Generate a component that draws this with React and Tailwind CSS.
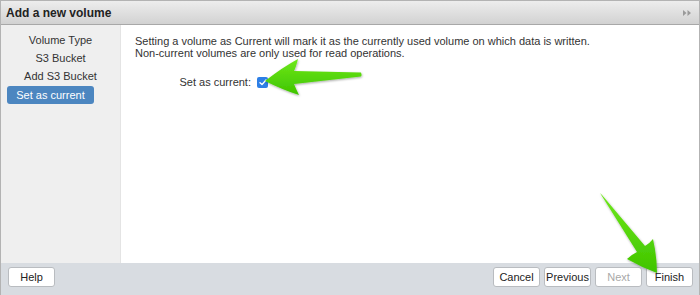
import React from "react";

function Btn({ children, disabled, className = "" }) {
  return (
    <div
      className={`h-[20px] w-[47px] flex items-center justify-center bg-white border border-[#b9bcc0] rounded-[3px] text-[11px] ${
        disabled ? "text-[#a8a8a8]" : "text-[#222]"
      } ${className}`}
    >
      {children}
    </div>
  );
}

export default function App() {
  return (
    <div className="relative w-[700px] h-[295px] flex flex-col overflow-hidden border-x border-t border-[#b3b3b3] font-['Liberation_Sans',Arial,sans-serif] text-[#333]">
      {/* title bar */}
      <div className="h-[24px] shrink-0 flex items-center justify-between pl-[5px] pr-[8px] bg-gradient-to-b from-[#ededed] to-[#d2d2d2] border-b border-[#a8a8a8]">
        <span className="text-[12px] font-bold text-[#222]">Add a new volume</span>
        <svg width="8" height="6" viewBox="0 0 8 6">
          <path d="M0 0 L3.5 3 L0 6 Z M4.5 0 L8 3 L4.5 6 Z" fill="#9a9a9a" />
        </svg>
      </div>

      {/* body */}
      <div className="flex flex-1 min-h-0">
        <div className="w-[120px] shrink-0 bg-[#efefef] border-r border-[#e4e4e4] pt-[6px] flex flex-col items-center text-[11px] text-[#333]">
          <div className="h-[18px] leading-[18px]">Volume Type</div>
          <div className="h-[18px] leading-[18px]">S3 Bucket</div>
          <div className="h-[18px] leading-[18px]">Add S3 Bucket</div>
          <div className="mt-[1px] h-[18px] leading-[18px] w-[87px] ml-[-21px] self-start ml-[6px] rounded-[3px] bg-[#4c86c0] text-white text-center">
            Set as current
          </div>
        </div>
        <div className="flex-1 bg-white pl-[14px] pt-[10px] text-[11px] text-[#333]">
          <p className="leading-[12px]">
            Setting a volume as Current will mark it as the currently used volume on which data is written.
          </p>
          <p className="leading-[12px]">Non-current volumes are only used for read operations.</p>
          <div className="mt-[15px] flex items-center">
            <span className="w-[116px] text-right">Set as current:</span>
            <div className="ml-[6px] w-[11px] h-[11px] rounded-[2px] bg-[#2d7fe6] flex items-center justify-center">
              <svg width="8" height="7" viewBox="0 0 8 7">
                <path d="M1 3.8 L3 5.6 L7 1" fill="none" stroke="white" strokeWidth="1.4" strokeLinecap="round" strokeLinejoin="round" />
              </svg>
            </div>
          </div>
        </div>
      </div>

      {/* footer */}
      <div className="h-[32px] shrink-0 bg-[#d8dce1] flex items-start justify-between pt-[4px] pl-[7px] pr-[6px]">
        <Btn>Help</Btn>
        <div className="flex gap-[4px]">
          <Btn>Cancel</Btn>
          <Btn>Previous</Btn>
          <Btn disabled>Next</Btn>
          <Btn>Finish</Btn>
        </div>
      </div>

      {/* annotation arrows */}
      <svg className="absolute left-0 top-0 pointer-events-none" width="700" height="295" viewBox="0 0 700 295">
        <defs>
          <filter id="sh" x="-20%" y="-20%" width="140%" height="140%">
            <feDropShadow dx="0.5" dy="1" stdDeviation="1" floodColor="#000" floodOpacity="0.35" />
          </filter>
          <linearGradient id="g1" x1="0" y1="0" x2="0" y2="1">
            <stop offset="0" stopColor="#6ee81a" />
            <stop offset="1" stopColor="#3fc400" />
          </linearGradient>
        </defs>
        <path
          d="M264 80 Q282 66 297 58 Q295 66 293 70 L360 71.5 Q361 73.5 360 75.5 L293 83 Q295 88 298 94 Q282 89 264 80 Z"
          fill="url(#g1)"
          filter="url(#sh)"
        />
        <path
          d="M599 192 L601 194 L644 245 Q649 242 652 238 Q656 256 656 272 Q640 266 626 258 Q630 254 636 251 Z"
          fill="url(#g1)"
          filter="url(#sh)"
        />
      </svg>
    </div>
  );
}
